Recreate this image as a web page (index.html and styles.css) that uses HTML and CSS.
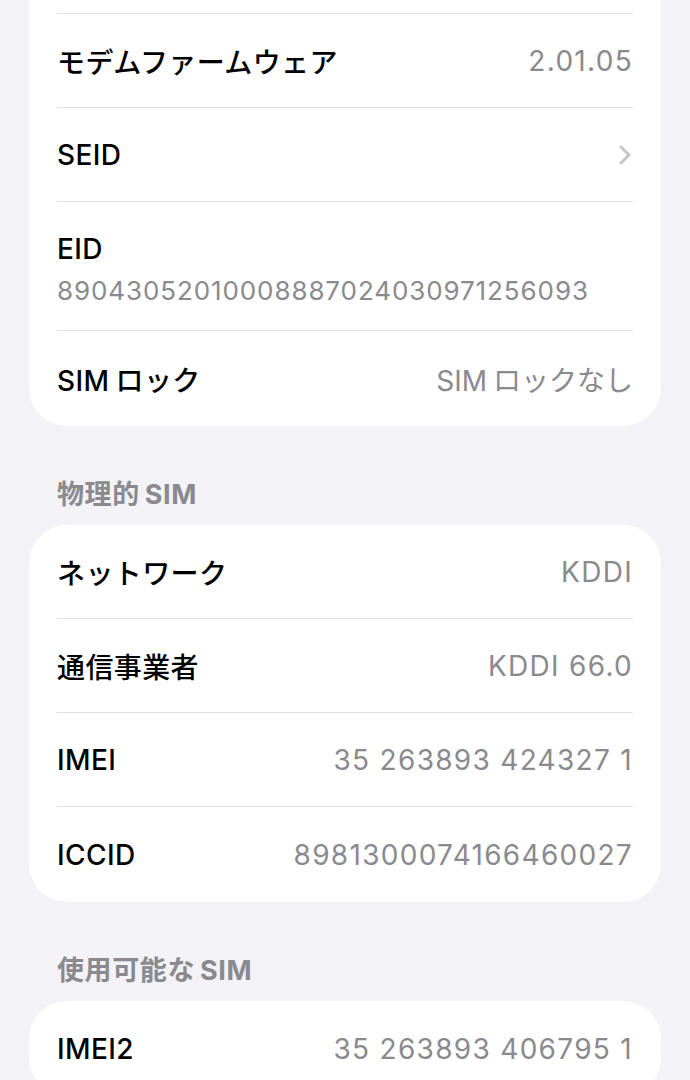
FILE: index.html
```html
<!DOCTYPE html>
<html lang="ja">
<head>
    <meta charset="UTF-8">
    <meta name="viewport" content="width=device-width, initial-scale=1.0">
    <title>情報</title>
    <link rel="stylesheet" href="styles.css">
</head>
<body>
    <div class="page">
        <div class="card card-top">
            <div class="row"></div>
            <div class="row">
                <span class="label">モデムファームウェア</span>
                <span class="value">2.01.05</span>
            </div>
            <div class="row">
                <span class="label">SEID</span>
                <svg class="chevron" width="14" height="22" viewBox="0 0 14 22">
                    <path d="M3 3 L11 11 L3 19" fill="none" stroke="#c5c5c8" stroke-width="3" stroke-linecap="round" stroke-linejoin="round"/>
                </svg>
            </div>
            <div class="row row-stack">
                <span class="label">EID</span>
                <span class="value value-sub">89043052010008887024030971256093</span>
            </div>
            <div class="row">
                <span class="label"><span class="latin">SIM</span>ロック</span>
                <span class="value value-ja"><span class="latin">SIM</span>ロックなし</span>
            </div>
        </div>

        <h2 class="section-title"><span>物理的</span><span class="latin-left">SIM</span></h2>
        <div class="card">
            <div class="row">
                <span class="label">ネットワーク</span>
                <span class="value">KDDI</span>
            </div>
            <div class="row">
                <span class="label">通信事業者</span>
                <span class="value">KDDI 66.0</span>
            </div>
            <div class="row">
                <span class="label">IMEI</span>
                <span class="value">35 263893 424327 1</span>
            </div>
            <div class="row">
                <span class="label">ICCID</span>
                <span class="value">8981300074166460027</span>
            </div>
        </div>

        <h2 class="section-title"><span>使用可能な</span><span class="latin-left">SIM</span></h2>
        <div class="card">
            <div class="row">
                <span class="label">IMEI2</span>
                <span class="value">35 263893 406795 1</span>
            </div>
        </div>
    </div>
</body>
</html>
```

FILE: styles.css
```css
html, body {
    margin: 0;
    padding: 0;
    background-color: #f2f2f7;
}

body {
    font-family: "Inter", "Noto Sans CJK JP", sans-serif;
    color: #000;
    -webkit-font-smoothing: antialiased;
}

.page {
    padding: 0 29px;
    height: 1080px;
    overflow: hidden;
}

.card {
    background-color: #fff;
    border-radius: 38px;
    overflow: hidden;
}

.card-top {
    margin-top: -80px;
}

.row {
    display: flex;
    align-items: center;
    justify-content: space-between;
    height: 93px;
    margin: 0 28px;
    border-bottom: 1px solid #e0e0e5;
}

.row:last-child {
    border-bottom: none;
    height: 95px;
}

.row-stack {
    flex-direction: column;
    align-items: flex-start;
    justify-content: flex-start;
    height: auto;
    padding: 30px 0 24px;
}

.label {
    font-size: 28px;
    font-weight: 500;
    letter-spacing: 0.4px;
}

.value {
    font-size: 28px;
    font-weight: 400;
    color: #8a8a8e;
    letter-spacing: 1.3px;
}

.value-ja {
    letter-spacing: 0;
}

.value-sub {
    font-size: 26px;
    margin-top: 9px;
    letter-spacing: 0.9px;
}

.latin {
    margin-right: 6px;
}

.latin-left {
    margin-left: 5px;
}

.chevron {
    display: block;
    margin-right: 1px;
}

.section-title {
    margin: 51px 0 13px 28px;
    font-size: 27px;
    line-height: 35px;
    font-weight: 700;
    color: #8a8a8e;
    letter-spacing: 0.6px;
}
```
